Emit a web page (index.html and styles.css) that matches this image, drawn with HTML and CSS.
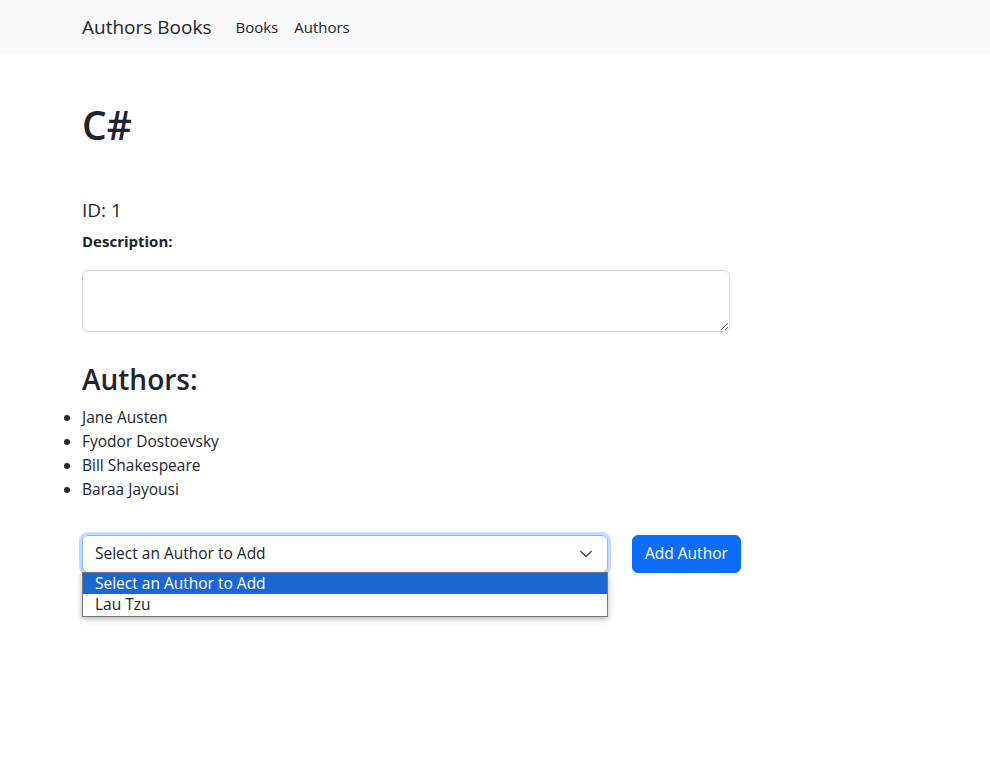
FILE: index.html
```html
<!DOCTYPE html>
<html lang="en">
<head>
<meta charset="utf-8">
<title>Authors Books</title>
<link rel="stylesheet" href="styles.css">
</head>
<body>
<nav class="navbar">
  <a class="brand" href="#">Authors Books</a>
  <a class="nav-link" href="#">Books</a>
  <a class="nav-link" href="#">Authors</a>
</nav>
<main class="content">
  <h1 class="title">C#</h1>
  <h5 class="book-id">ID: 1</h5>
  <label class="desc-label">Description:</label>
  <textarea class="desc-input" rows="2"></textarea>
  <h2 class="authors-title">Authors:</h2>
  <ul class="author-list">
    <li>Jane Austen</li>
    <li>Fyodor Dostoevsky</li>
    <li>Bill Shakespeare</li>
    <li>Baraa Jayousi</li>
  </ul>
  <div class="add-row">
    <div class="select-wrap">
      <div class="select">
        <span>Select an Author to Add</span>
        <svg class="chevron" width="16" height="16" viewBox="0 0 16 16"><path d="M2 5l6 6 6-6" fill="none" stroke="#343a40" stroke-width="1.6" stroke-linecap="round" stroke-linejoin="round"/></svg>
      </div>
      <div class="dropdown">
        <div class="option selected">Select an Author to Add</div>
        <div class="option">Lau Tzu</div>
      </div>
    </div>
    <button class="btn">Add Author</button>
  </div>
</main>
</body>
</html>
```
FILE: styles.css
```css
* { box-sizing: border-box; }
html, body { margin: 0; padding: 0; min-height: 757px; }
body {
  font-family: "Segoe UI", "Open Sans", "Noto Sans", sans-serif;
  font-size: 15.5px;
  line-height: 1.5;
  color: #212529;
  background: #fff;
}
.navbar {
  height: 54px;
  background: #f8f9fa;
  display: flex;
  align-items: center;
  padding-left: 82px;
}
.brand {
  font-size: 19px;
  color: #212529;
  text-decoration: none;
  margin-right: 16px;
}
.nav-link {
  font-size: 15px;
  color: #212529;
  text-decoration: none;
  padding: 0 8px;
}
.content {
  padding-left: 82px;
  padding-top: 48px;
}
.title {
  font-size: 39px;
  font-weight: 600;
  line-height: 1.2;
  margin: 0 0 50px;
}
.book-id {
  font-size: 19px;
  font-weight: 500;
  line-height: 1.2;
  margin: 0 0 8px;
}
.desc-label {
  display: block;
  font-weight: 700;
  font-size: 15px;
  margin-bottom: 18px;
}
.desc-input {
  display: block;
  width: 648px;
  height: 62px;
  border: 1px solid #ced4da;
  border-radius: 6px;
  padding: 6px 12px;
  font: inherit;
  resize: vertical;
  margin: 0 0 31px;
}
.authors-title {
  font-size: 28px;
  font-weight: 600;
  line-height: 1.2;
  margin: 0 0 8px;
}
.author-list {
  margin: 0 0 34px -82px;
  padding-left: 82px;
  list-style: disc outside;
}
.author-list li { line-height: 24px; }
.add-row {
  display: flex;
  align-items: flex-start;
  gap: 24px;
}
.select-wrap {
  position: relative;
  width: 526px;
  flex-shrink: 0;
}
.select {
  height: 38px;
  border: 1px solid #86b7fe;
  border-radius: 6px;
  box-shadow: 0 0 0 3px rgba(13, 110, 253, 0.25);
  padding: 0 12px;
  display: flex;
  align-items: center;
  justify-content: space-between;
  font-size: 15.5px;
}
.chevron { width: 14px; height: 14px; margin-right: 2px; }
.dropdown {
  position: absolute;
  top: 37px;
  left: 0;
  width: 100%;
  background: #fff;
  border: 1px solid #767676;
  box-shadow: 0 2px 6px rgba(0, 0, 0, 0.3);
  font-size: 15.5px;
  z-index: 2;
}
.option {
  height: 21.5px;
  line-height: 21px;
  padding: 0 12px;
}
.option.selected {
  background: #1a67d2;
  color: #fff;
}
.btn {
  flex-shrink: 0;
  white-space: nowrap;
  height: 38px;
  padding: 0 12px;
  border: 1px solid #0d6efd;
  background: #0d6efd;
  color: #fff;
  border-radius: 6px;
  font: inherit;
  font-size: 15.5px;
}
```
